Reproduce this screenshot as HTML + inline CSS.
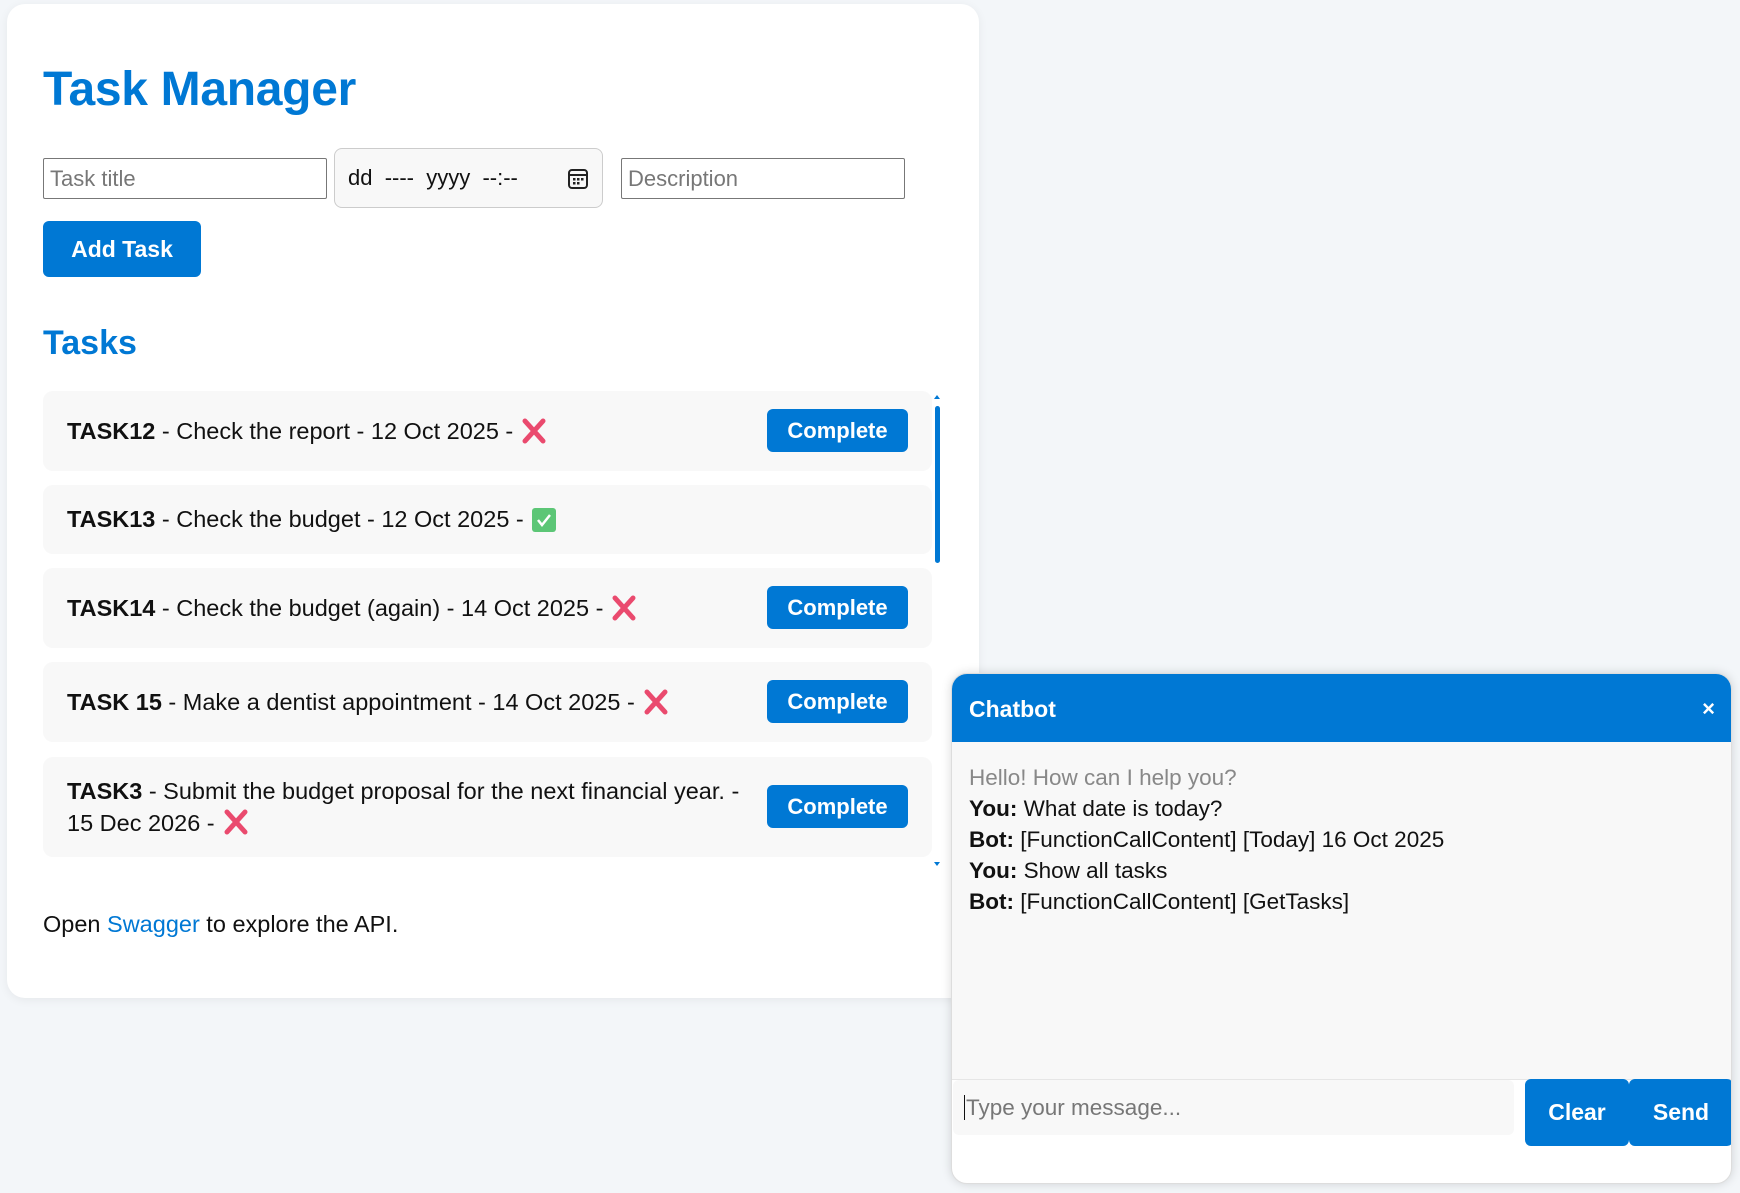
<!DOCTYPE html>
<html><head><meta charset="utf-8"><style>
*{box-sizing:border-box;margin:0;padding:0}
body{width:1740px;height:1193px;background:#f3f6f9;font-family:"Liberation Sans",Arial,sans-serif;position:relative;overflow:hidden;color:#111}
.card{position:absolute;left:7px;top:4px;width:972px;height:994px;background:#fff;border-radius:18px;box-shadow:0 2px 10px rgba(0,0,0,.06)}
.abs{position:absolute}
h1{position:absolute;left:36px;top:58px;font-size:48px;font-weight:bold;color:#0078d4;letter-spacing:-0.3px}
.inp{position:absolute;border:1px solid #777;border-radius:2px;background:#fff;font-size:22px;color:#777;padding-left:6px;display:flex;align-items:center}
.date{position:absolute;left:334px;top:148px;width:269px;height:60px;border:1px solid #ccc;border-radius:8px;background:#f8f8f8;font-size:22px;color:#111;padding-left:13px;display:flex;align-items:center}
.btn{position:absolute;background:#0078d4;color:#fff;font-weight:bold;border-radius:6px;display:flex;align-items:center;justify-content:center}
h2{position:absolute;left:36px;top:320px;font-size:34px;font-weight:bold;color:#0078d4}
.item{position:absolute;left:43px;width:889px;background:#f8f8f8;border-radius:10px;font-size:23.5px;display:flex;align-items:center;padding-left:24px}
.item b{font-weight:bold}
.cb{position:absolute;left:724px;width:141px;height:43px;font-size:22px}
.x{display:inline-block;vertical-align:-4px;margin-left:8px}
.chat{position:absolute;left:951px;top:673px;width:781px;height:511px;background:#fff;border-radius:16px;box-shadow:0 0 10px rgba(0,0,0,.15);overflow:hidden;border:1px solid #ddd}
.ch{height:69px;background:#0078d4;color:#fff;font-weight:bold;font-size:23px;padding:22px 0 0 17px;position:relative}
.msgs{position:absolute;top:68px;left:0;width:781px;height:338px;background:#f8f8f8;padding:20px 17px;font-size:22.5px;line-height:31px;border-bottom:1px solid #e6e6e6}
</style></head><body>
<div class="card">
<h1>Task Manager</h1>
<div class="inp" style="left:36px;top:154px;width:284px;height:41px">Task title</div>
<div class="date" style="left:327px;top:144px">dd&nbsp; ---- &nbsp;yyyy &nbsp;--:--
<svg class="abs" style="left:232px;top:19px" width="22" height="22" viewBox="0 0 22 22"><rect x="2" y="2" width="18" height="18" rx="3" fill="none" stroke="#222" stroke-width="2"/><line x1="2" y1="7" x2="20" y2="7" stroke="#222" stroke-width="2"/><g fill="#222"><rect x="6" y="10" width="2.5" height="2.5"/><rect x="10" y="10" width="2.5" height="2.5"/><rect x="14" y="10" width="2.5" height="2.5"/><rect x="6" y="14" width="2.5" height="2.5"/><rect x="10" y="14" width="2.5" height="2.5"/></g></svg></div>
<div class="inp" style="left:614px;top:154px;width:284px;height:41px">Description</div>
<div class="btn" style="left:36px;top:217px;width:158px;height:56px;font-size:23px">Add Task</div>
<h2>Tasks</h2>
</div>
<div class="item" style="top:391px;height:80px"><b>TASK12</b>&nbsp;- Check the report - 12 Oct 2025 -<svg class="x" width="26" height="26" viewBox="0 0 26 26"><path d="M4 3L22 23M22 3L4 23" stroke="#ea4a6e" stroke-width="5" stroke-linecap="round"/></svg></div>
<div class="item" style="top:485px;height:69px"><b>TASK13</b>&nbsp;- Check the budget - 12 Oct 2025 -<svg class="x" width="24" height="24" viewBox="0 0 24 24"><rect x="0" y="0" width="24" height="24" rx="3" fill="#5cc676"/><path d="M6 12l4 5 8-10" stroke="#fff" stroke-width="2.5" fill="none"/></svg></div>
<div class="item" style="top:568px;height:80px"><b>TASK14</b>&nbsp;- Check the budget (again) - 14 Oct 2025 -<svg class="x" width="26" height="26" viewBox="0 0 26 26"><path d="M4 3L22 23M22 3L4 23" stroke="#ea4a6e" stroke-width="5" stroke-linecap="round"/></svg></div>
<div class="item" style="top:662px;height:80px"><b>TASK 15</b>&nbsp;- Make a dentist appointment - 14 Oct 2025 -<svg class="x" width="26" height="26" viewBox="0 0 26 26"><path d="M4 3L22 23M22 3L4 23" stroke="#ea4a6e" stroke-width="5" stroke-linecap="round"/></svg></div>
<div class="item" style="top:757px;height:100px;line-height:32px;display:block;padding-top:18px;white-space:nowrap"><b>TASK3</b> - Submit the budget proposal for the next financial year. -<br>15 Dec 2026 -<svg class="x" width="26" height="26" viewBox="0 0 26 26"><path d="M4 3L22 23M22 3L4 23" stroke="#ea4a6e" stroke-width="5" stroke-linecap="round"/></svg></div>
<div class="btn cb" style="left:767px;top:409px">Complete</div>
<div class="btn cb" style="left:767px;top:586px">Complete</div>
<div class="btn cb" style="left:767px;top:680px">Complete</div>
<div class="btn cb" style="left:767px;top:785px">Complete</div>
<div class="abs" style="left:935px;top:406px;width:5px;height:157px;background:#0078d4;border-radius:3px"></div>
<div class="abs" style="left:934px;top:395px;width:0;height:0;border:3px solid transparent;border-bottom:4px solid #0078d4;border-top:0"></div>
<div class="abs" style="left:934px;top:862px;width:0;height:0;border:3px solid transparent;border-top:4px solid #0078d4;border-bottom:0"></div>
<div class="abs" style="left:43px;top:911px;font-size:23.5px">Open <span style="color:#0078d4">Swagger</span> to explore the API.</div>
<div class="chat">
<div class="ch">Chatbot<span style="position:absolute;right:16px;top:22px;font-size:22px">×</span></div>
<div class="msgs">
<div style="color:#888">Hello! How can I help you?</div>
<div><b>You:</b> What date is today?</div>
<div><b>Bot:</b> [FunctionCallContent] [Today] 16 Oct 2025</div>
<div><b>You:</b> Show all tasks</div>
<div><b>Bot:</b> [FunctionCallContent] [GetTasks]</div>
</div>
<div class="abs" style="left:1px;top:406px;width:561px;height:55px;background:#f8f8f8;border-radius:6px;font-size:22.5px;color:#777;padding:15px 0 0 11px"><span style="border-left:1px solid #111;padding-left:1px">Type your message...</span></div>
<div class="btn" style="left:573px;top:405px;width:104px;height:67px;font-size:23px">Clear</div>
<div class="btn" style="left:677px;top:405px;width:104px;height:67px;font-size:23px">Send</div>
</div>
</body></html>
